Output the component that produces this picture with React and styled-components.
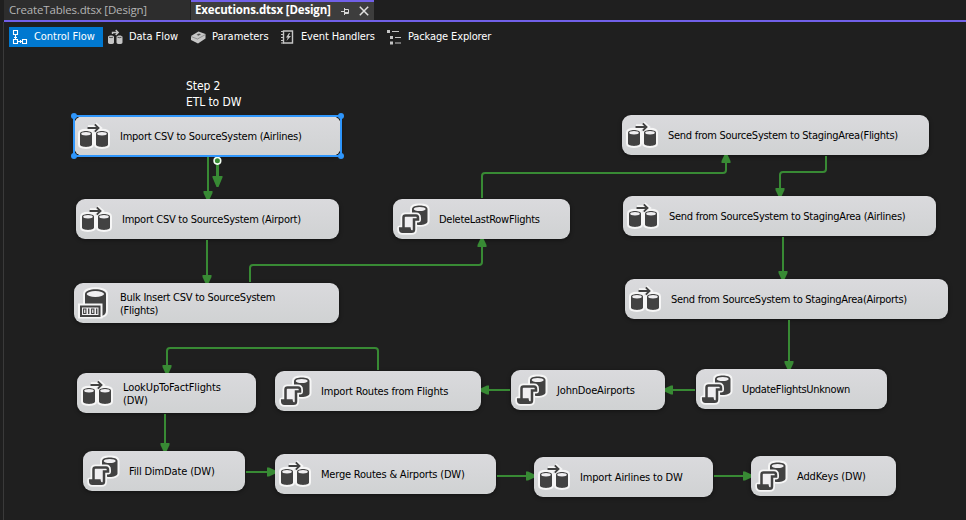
import React from 'react';
import styled, { createGlobalStyle } from 'styled-components';

const GREEN = '#388a34';
const PURPLE = '#7160e8';
const UI_FONT = "'DejaVu Sans Condensed', 'DejaVu Sans', sans-serif";

const Global = createGlobalStyle`
  body { margin: 0; background: #1f1f1f; overflow: hidden; }
  * { box-sizing: border-box; }
`;

const Window = styled.div`
  display: flex;
  flex-direction: column;
  width: 966px;
  height: 520px;
  padding-left: 3px;
  background: #1f1f1f;
  font: 11px/13px ${UI_FONT};
  white-space: nowrap;
`;

const TabStrip = styled.div`
  display: flex;
  gap: 1px;
  height: 22px;
  margin-left: 1px;
  border-bottom: 2px solid ${PURPLE};
`;

const Tab = styled.div`
  display: flex;
  align-items: center;
  width: ${(p) => (p.$active ? 183 : 186)}px;
  height: 20px;
  padding-left: ${(p) => (p.$active ? 4 : 5)}px;
  border-top: 2px solid ${(p) => (p.$active ? PURPLE : '#2d2d2d')};
  background: ${(p) => (p.$active ? '#3d3d3d' : '#2d2d2d')};
  color: ${(p) => (p.$active ? '#fff' : '#b4b4b4')};
  font: ${(p) => (p.$active ? 700 : 400)} 11.5px/16px 'Open Sans', 'Noto Sans', sans-serif;
  letter-spacing: ${(p) => (p.$active ? -0.15 : -0.18)}px;
`;

const TabTitle = styled.span`
  width: ${(p) => (p.$active ? 146 : 150)}px;
  padding-bottom: 2px;
`;

const TabIcons = styled.span`
  display: flex;
  align-items: center;
  gap: 9px;
`;

const Surface = styled.main`
  display: flex;
  flex-direction: column;
  flex: 1;
  border-left: 1px solid #3a3a3a;
`;

const Toolbar = styled.nav`
  display: flex;
  height: 30px;
  padding: 5px 0 0 5px;
`;

const ToolButton = styled.div`
  display: flex;
  align-items: center;
  width: ${(p) => p.$width}px;
  height: 20px;
  padding-left: 3px;
  gap: ${(p) => p.$gap ?? 6}px;
  background: ${(p) => (p.$active ? '#0078d0' : 'transparent')};
  color: #fff;
  letter-spacing: ${(p) => p.$tracking}px;
  svg { flex: none; }
`;

const ToolLabel = styled.span`
  padding-bottom: 2px;
`;

const Canvas = styled.section`
  position: relative;
  flex: 1;
  margin: -52px 0 0 -4px;
  pointer-events: none;
`;

const Annotation = styled.div`
  position: absolute;
  left: 186px;
  top: 78px;
  color: #fff;
  font-size: 12px;
  line-height: 16px;
  letter-spacing: -0.1px;
`;

const Edges = styled.svg`
  position: absolute;
  inset: 0;
`;

const Task = styled.div`
  position: absolute;
  left: ${(p) => p.$x}px;
  top: ${(p) => p.$y}px;
  display: flex;
  align-items: center;
  width: ${(p) => p.$w}px;
  height: 40px;
  border-radius: 9px;
  background: linear-gradient(#dadadd, #d0d2d3);
  box-shadow: 0 1px 4px rgba(0, 0, 0, 0.45);
`;

const TaskIcon = styled.svg`
  flex: none;
  width: 46px;
  height: 40px;
`;

const TaskLabel = styled.span`
  padding-top: 1px;
  color: #000;
  letter-spacing: ${(p) => p.$tracking}px;
  white-space: pre-line;
`;

const Selection = styled.svg`
  position: absolute;
  left: 70px;
  top: 112px;
`;

const Cylinder = ({ x }) => (
  <g>
    <path d={`M${x} 17.8c0-3.6 12-3.6 12 0v10.7c0 3.200-12 3.200-12 0z`} fill="#424242" />
    <ellipse cx={x + 6} cy="17.700" rx="4.800" ry="1.700" fill="#f0eff1" />
  </g>
);

const DataFlowArt = () => (
  <>
    <g fill="#f6f6f6" stroke="#f6f6f6" strokeWidth="4" strokeLinejoin="round">
      <path d="M6 17.500c0-3.800 12-3.800 12 0v11c0 3.200-12 3.200-12 0z" />
      <path d="M22 17.500c0-3.800 12-3.800 12 0v11c0 3.200-12 3.200-12 0z" />
      <path d="M14 12h10M20.500 8.500l4 3.500-4 3.500" strokeWidth="5.500" strokeLinejoin="miter" />
    </g>
    <Cylinder x={6} />
    <Cylinder x={22} />
    <path d="M14.500 13V12H24.500M20.800 8.300l3.700 3.700-3.700 3.700" fill="none" stroke="#424242" strokeWidth="1.900" />
  </>
);

const SCROLL = 'M10.5 29V18.5Q10.5 16.5 12.5 16.5H23Q25 16.5 25 19V20.5H21V30.5Q21 32.8 18.5 32.8H9.5Q7.2 32.8 7.2 30V29.6H16.5Q16.8 32 18.5 32.5';

const ScriptArt = () => (
  <>
    <path
      d="M19 10c0-4.6 15.5-4.6 15.5 0v12c0 5-15.5 5-15.5 0z"
      fill="#f6f6f6"
      stroke="#f6f6f6"
      strokeWidth="4"
      strokeLinejoin="round"
    />
    <path d="M19 10c0-4.6 15.5-4.6 15.5 0v12.5c0 4.6-15.5 4.6-15.5 0z" fill="#424242" />
    <ellipse cx="26.7" cy="10" rx="6" ry="2.1" fill="#f0eff1" />
    <path d={SCROLL} fill="none" stroke="#f6f6f6" strokeWidth="6" strokeLinejoin="round" />
    <path d="M11 17h9.5v15h-3.5v-3h-6z" fill="#f0eff1" />
    <path d="M7.5 30h9l1.500 2.500h-9z" fill="#424242" />
    <path d={SCROLL} fill="none" stroke="#424242" strokeWidth="2.5" />
  </>
);

const BulkArt = () => (
  <>
    <path
      d="M11 11c0-6.5 21-6.5 21 0v17c0 3-2 4.5-5 5H11z"
      fill="#424242"
      stroke="#f6f6f6"
      strokeWidth="4"
      strokeLinejoin="round"
      paintOrder="stroke"
    />
    <ellipse cx="21.4" cy="11" rx="8.7" ry="2.9" fill="#f0eff1" />
    <path d="M4 20.5h24.5v15H4z" fill="#f6f6f6" />
    <path d="M6 22.5h20.5v11.5H6z" fill="#424242" />
    <path d="M8 24.5h16.500v7.500H8z" fill="#f0eff1" />
    <path d="M9.600 26h2.300v4.500H9.600zM17.600 26h2.300v4.500h-2.300z" fill="none" stroke="#424242" strokeWidth="1.100" />
    <path d="M14.700 25.500v5.500M22.700 25.500v5.500" stroke="#424242" strokeWidth="1.300" />
  </>
);

const ART = { flow: DataFlowArt, script: ScriptArt, bulk: BulkArt };

const TASKS = [
  { x: 74, y: 116, w: 267, art: 'flow', text: 'Import CSV to SourceSystem (Airlines)', tracking: -0.24 },
  { x: 76, y: 199, w: 263, art: 'flow', text: 'Import CSV to SourceSystem (Airport)', tracking: -0.25 },
  { x: 74, y: 283, w: 265, art: 'bulk', text: 'Bulk Insert CSV to SourceSystem\n(Flights)', tracking: -0.26 },
  { x: 393, y: 199, w: 177, art: 'script', text: 'DeleteLastRowFlights', tracking: -0.29 },
  { x: 622, y: 115, w: 307, art: 'flow', text: 'Send from SourceSystem to StagingArea(Flights)', tracking: -0.27 },
  { x: 623, y: 196, w: 313, art: 'flow', text: 'Send from SourceSystem to StagingArea (Airlines)', tracking: -0.27 },
  { x: 625, y: 279, w: 323, art: 'flow', text: 'Send from SourceSystem to StagingArea(Airports)', tracking: -0.27 },
  { x: 696, y: 369, w: 191, art: 'script', text: 'UpdateFlightsUnknown', tracking: -0.33 },
  { x: 511, y: 370, w: 154, art: 'script', text: 'JohnDoeAirports', tracking: -0.17 },
  { x: 275, y: 371, w: 206, art: 'script', text: 'Import Routes from Flights', tracking: -0.18 },
  { x: 77, y: 373, w: 179, art: 'flow', text: 'LookUpToFactFlights\n(DW)', tracking: -0.1 },
  { x: 83, y: 451, w: 162, art: 'script', text: 'Fill DimDate (DW)', tracking: -0.15 },
  { x: 275, y: 454, w: 221, art: 'flow', text: 'Merge Routes & Airports (DW)', tracking: -0.2 },
  { x: 534, y: 457, w: 179, art: 'flow', text: 'Import Airlines to DW', tracking: -0.17 },
  { x: 751, y: 456, w: 145, art: 'script', text: 'AddKeys (DW)', tracking: -0.14 },
];

const EDGE_PATHS = [
  'M208 157V192',
  'M207 240V276',
  'M250 282V268Q250 265 253 265H479Q482 265 482 262V246',
  'M482 198V176Q482 173 485 173H723Q726 173 726 170V162',
  'M826 156V169Q826 172 823 172H783Q780 172 780 175V189',
  'M783 237V272',
  'M789 320V362',
  'M695 390H672',
  'M510 390H488',
  'M378 370V351Q378 348 375 348H170Q167 348 167 351V366',
  'M165 414V444',
  'M246 472H268',
  'M497 476H527',
  'M714 476H744',
];

const EDGE_HEADS = [
  [208, 199, 0], [207, 283, 0], [482, 239, 180], [726, 155, 180], [780, 196, 0],
  [783, 279, 0], [789, 369, 0], [665, 390, 90], [481, 390, 90], [167, 373, 0],
  [165, 451, 0], [275, 472, -90], [534, 476, -90], [751, 476, -90],
];

function Connectors() {
  return (
    <Edges width="966" height="520">
      <g fill="none" stroke={GREEN} strokeWidth="2">
        {EDGE_PATHS.map((d) => <path key={d} d={d} />)}
      </g>
      <g fill={GREEN}>
        {EDGE_HEADS.map(([x, y, angle]) => (
          <path key={`${x}-${y}`} d="M-4.5-8h9v2L1.7 0h-3.400L-4.500-6z" transform={`translate(${x} ${y}) rotate(${angle})`} />
        ))}
        <path d="M216 163h3v13h3.500v1.500L218.500 187h-2L212.500 177.500V176h3.500z" />
        <circle cx="217.400" cy="160.800" r="3.300" stroke="#f4fff4" strokeWidth="1.600" />
      </g>
    </Edges>
  );
}

function SelectionFrame() {
  return (
    <Selection width="275" height="49">
      <rect x="4" y="4" width="267" height="40" fill="none" stroke="#2f96fb" strokeWidth="2" />
      <g fill="#2f96fb">
        {[4, 271].flatMap((x) => [4, 44].map((y) => <circle key={`${x}-${y}`} cx={x} cy={y} r="3" />))}
      </g>
    </Selection>
  );
}

const PinIcon = () => (
  <svg width="9" height="9" fill="none" stroke="#d6d6d6" strokeWidth="1">
    <path d="M0 4.5h3M3.5 1v7M3.5 2.5h4v4h-4M4 5.5h4" />
  </svg>
);

const CloseIcon = () => (
  <svg width="10" height="10" fill="none" stroke="#e0e0e0" strokeWidth="1.5">
    <path d="M.8.8l8.4 8.4M9.2.8L.8 9.2" />
  </svg>
);

const ControlFlowIcon = () => (
  <svg width="17" height="16" fill="none" stroke="#fff" strokeWidth="1.1">
    <path d="M1.5 1.5h4v4h-4zM1.5 10.5h4v4h-4zM10.5 10.5h4v4h-4zM3.5 6v4M2 8.5h3M6 12.5h4M8.5 11v3" />
  </svg>
);

const DataFlowIcon = () => (
  <svg width="15" height="16" fill="#c5c5c5">
    <path d="M0 8c0-2 6-2 6 0v5.500c0 2-6 2-6 0zM8.500 8c0-2 6-2 6 0v5.500c0 2-6 2-6 0z" />
    <path d="M1 8.200q2 1 4 0M9.500 8.200q2 1 4 0" stroke="#1f1f1f" fill="none" strokeWidth=".7" />
    <path d="M4.500 5V3.500H10M7.700 1l2.500 2.500L7.700 6" fill="none" stroke="#c5c5c5" strokeWidth="1.400" />
  </svg>
);

const ParametersIcon = () => (
  <svg width="15" height="14">
    <path d="M0 6L7.500 1.500 14.500 4v4.500L7 13.500 0 10z" fill="#c5c5c5" />
    <path d="M0 6.500L6.500 9l8-4.500" fill="none" stroke="#6a6a6a" strokeWidth=".6" />
    <path d="M5.500 4.800l2.500-1.300 2 .8-2.500 1.500z" fill="#555" />
  </svg>
);

const EventIcon = () => (
  <svg width="13" height="14" fill="none" stroke="#c5c5c5">
    <path d="M2.5 1h9v12h-9z" strokeWidth="1.4" />
    <path d="M0 1.5h3M0 4.5h3M0 7.5h3M0 10.5h3M0 13h3" />
    <path d="M8 3L5 7.5h1.8L5.5 11 10 6H7.8L9 3z" fill="#c5c5c5" stroke="none" />
  </svg>
);

const ExplorerIcon = () => (
  <svg width="14" height="15" fill="#c5c5c5">
    <path d="M0 0h3v3H0zM3 6h3v3H3zM3 11.5h3v3H3zM5 1h7v1H5zM8 7h6v1H8zM8 12.5h6v1H8z" />
  </svg>
);

const TOOLS = [
  { label: 'Control Flow', Icon: ControlFlowIcon, width: 94, gap: 5, tracking: -0.06, active: true },
  { label: 'Data Flow', Icon: DataFlowIcon, width: 83, gap: 6, tracking: -0.04, indent: 5 },
  { label: 'Parameters', Icon: ParametersIcon, width: 90, gap: 6, tracking: 0 },
  { label: 'Event Handlers', Icon: EventIcon, width: 106, gap: 7, tracking: -0.14 },
  { label: 'Package Explorer', Icon: ExplorerIcon, width: 120, gap: 7, tracking: -0.13 },
];

const ToolGroup = styled.div`
  display: flex;
  margin-left: 2px;
`;

const Tool = ({ label, Icon, width, gap, tracking, active }) => (
  <ToolButton $active={active} $width={width} $gap={gap} $tracking={tracking}>
    <Icon />
    <ToolLabel>{label}</ToolLabel>
  </ToolButton>
);

export default function App() {
  const [current, ...others] = TOOLS;
  return (
    <>
      <Global />
      <Window>
        <TabStrip>
          <Tab><TabTitle>CreateTables.dtsx [Design]</TabTitle></Tab>
          <Tab $active>
            <TabTitle $active>Executions.dtsx [Design]</TabTitle>
            <TabIcons><PinIcon /><CloseIcon /></TabIcons>
          </Tab>
        </TabStrip>
        <Surface>
          <Toolbar>
            <Tool {...current} />
            <ToolGroup>
              {others.map((tool) => <Tool key={tool.label} {...tool} />)}
            </ToolGroup>
          </Toolbar>
          <Canvas>
            <Annotation>Step 2<br />ETL to DW</Annotation>
            {TASKS.map(({ x, y, w, art, text, tracking }) => {
              const Art = ART[art];
              return (
                <Task key={text} $x={x} $y={y} $w={w}>
                  <TaskIcon><Art /></TaskIcon>
                  <TaskLabel $tracking={tracking}>{text}</TaskLabel>
                </Task>
              );
            })}
            <Connectors />
            <SelectionFrame />
          </Canvas>
        </Surface>
      </Window>
    </>
  );
}
